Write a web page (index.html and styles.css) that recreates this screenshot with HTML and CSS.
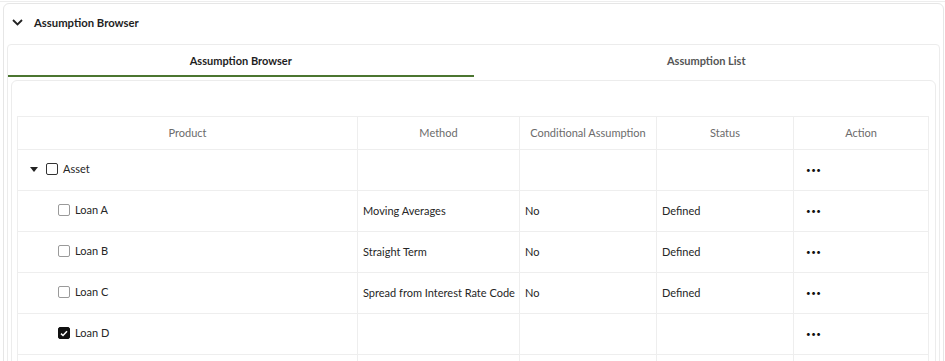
FILE: index.html
```html
<!DOCTYPE html>
<html lang="en">
<head>
    <meta charset="UTF-8">
    <title>Assumption Browser</title>
    <link rel="stylesheet" href="styles.css">
</head>
<body>
    <div class="top-strip"></div>
    <!-- Collapsible section -->
    <div class="section-card">
        <div class="section-header">
            <svg class="chevron" width="11" height="7" viewBox="0 0 11 7">
                <path d="M1 1 L5.5 5.5 L10 1" fill="none" stroke="#222" stroke-width="1.8"/>
            </svg>
            <span>Assumption Browser</span>
        </div>
        <!-- Tabs -->
        <div class="tab-box">
            <div class="tab-row">
                <div class="tab active">Assumption Browser</div>
                <div class="tab">Assumption List</div>
            </div>
            <div class="tab-panel">
                <table class="grid">
                    <colgroup>
                        <col style="width: 340px">
                        <col style="width: 162px">
                        <col style="width: 137px">
                        <col style="width: 137px">
                        <col style="width: 135px">
                    </colgroup>
                    <thead>
                        <tr>
                            <th>Product</th>
                            <th>Method</th>
                            <th>Conditional Assumption</th>
                            <th>Status</th>
                            <th>Action</th>
                        </tr>
                    </thead>
                    <tbody>
                        <tr>
                            <td class="product parent"><span class="caret"></span><span class="check dark"></span>Asset</td>
                            <td></td>
                            <td></td>
                            <td></td>
                            <td class="action"><span class="dots">&bull;&bull;&bull;</span></td>
                        </tr>
                        <tr>
                            <td class="product child"><span class="check"></span>Loan A</td>
                            <td>Moving Averages</td>
                            <td>No</td>
                            <td>Defined</td>
                            <td class="action"><span class="dots">&bull;&bull;&bull;</span></td>
                        </tr>
                        <tr>
                            <td class="product child"><span class="check"></span>Loan B</td>
                            <td>Straight Term</td>
                            <td>No</td>
                            <td>Defined</td>
                            <td class="action"><span class="dots">&bull;&bull;&bull;</span></td>
                        </tr>
                        <tr>
                            <td class="product child"><span class="check"></span>Loan C</td>
                            <td>Spread from Interest Rate Code</td>
                            <td>No</td>
                            <td>Defined</td>
                            <td class="action"><span class="dots">&bull;&bull;&bull;</span></td>
                        </tr>
                        <tr>
                            <td class="product child"><span class="check checked"><svg width="8" height="7" viewBox="0 0 8 7"><path d="M1 3.6 L3 5.5 L7 1.2" fill="none" stroke="#fff" stroke-width="1.5"/></svg></span>Loan D</td>
                            <td></td>
                            <td></td>
                            <td></td>
                            <td class="action"><span class="dots">&bull;&bull;&bull;</span></td>
                        </tr>
                        <tr>
                            <td class="product child"></td>
                            <td></td>
                            <td></td>
                            <td></td>
                            <td></td>
                        </tr>
                    </tbody>
                </table>
            </div>
        </div>
    </div>
</body>
</html>
```

FILE: styles.css
```css
/* Page */
body {
    margin: 0;
    height: 361px;
    overflow: hidden;
    background-color: #ffffff;
    font-family: Lato, "Open Sans", sans-serif;
    font-size: 11px;
    color: #333333;
}
.top-strip {
    height: 1px;
    margin-top: 1px;
    background-color: #ededed;
}
/* Section card */
.section-card {
    margin: 1px 1px 0 3px;
    border: 1px solid #e6e6e6;
    border-radius: 6px;
    padding: 0 3px;
    height: 400px;
}
.section-header {
    display: flex;
    align-items: center;
    height: 36px;
    padding: 0 0 2px 5px;
    gap: 11px;
    font-weight: 700;
    font-size: 11.3px;
    color: #1e1e1e;
}
.chevron {
    display: block;
}
/* Tabs */
.tab-box {
    margin-top: 2px;
    border: 1px solid #ececec;
    border-radius: 4px;
    padding: 0 3px;
    height: 360px;
}
.tab-row {
    display: flex;
    margin: 0 -3px;
}
.tab {
    flex: 1;
    text-align: center;
    height: 32px;
    line-height: 32px;
    font-weight: 700;
    font-size: 11px;
    color: #555555;
}
.tab.active {
    color: #1e1e1e;
    border-bottom: 2px solid #4b7530;
    height: 30px;
    line-height: 31px;
}
.tab-panel {
    margin-top: 3px;
    border: 1px solid #ececec;
    border-radius: 6px;
    padding: 35px 6px 0 5px;
    height: 300px;
}
/* Grid */
.grid {
    border-collapse: collapse;
    table-layout: fixed;
    width: 911px;
}
.grid th,
.grid td {
    border: 1px solid #eeeeee;
    padding: 0 5px 2px;
    text-align: left;
    white-space: nowrap;
}
.grid th {
    height: 30px;
    font-weight: 400;
    color: #6b6b6b;
    text-align: center;
}
.grid td {
    height: 38px;
    color: #262626;
}
.product.parent {
    padding-left: 12px;
}
.product.child {
    padding-left: 40px;
}
.caret {
    display: inline-block;
    width: 0;
    height: 0;
    border-left: 4px solid transparent;
    border-right: 4px solid transparent;
    border-top: 5px solid #222222;
    margin-right: 8px;
    vertical-align: middle;
    position: relative;
    top: -1px;
}
.check {
    display: inline-block;
    box-sizing: border-box;
    width: 12px;
    height: 12px;
    border: 1px solid #9a9a9a;
    border-radius: 2px;
    margin-right: 5px;
    vertical-align: middle;
    position: relative;
    top: -1px;
}
.check.dark {
    border-color: #333333;
}
.check.checked {
    background-color: #111111;
    border-color: #111111;
}
.check svg {
    display: block;
    margin: 2px 0 0 1px;
}
.action {
    padding-left: 12px !important;
}
.dots {
    font-size: 8px;
    letter-spacing: 0.5px;
    color: #111111;
    position: relative;
    top: -1px;
}
```
